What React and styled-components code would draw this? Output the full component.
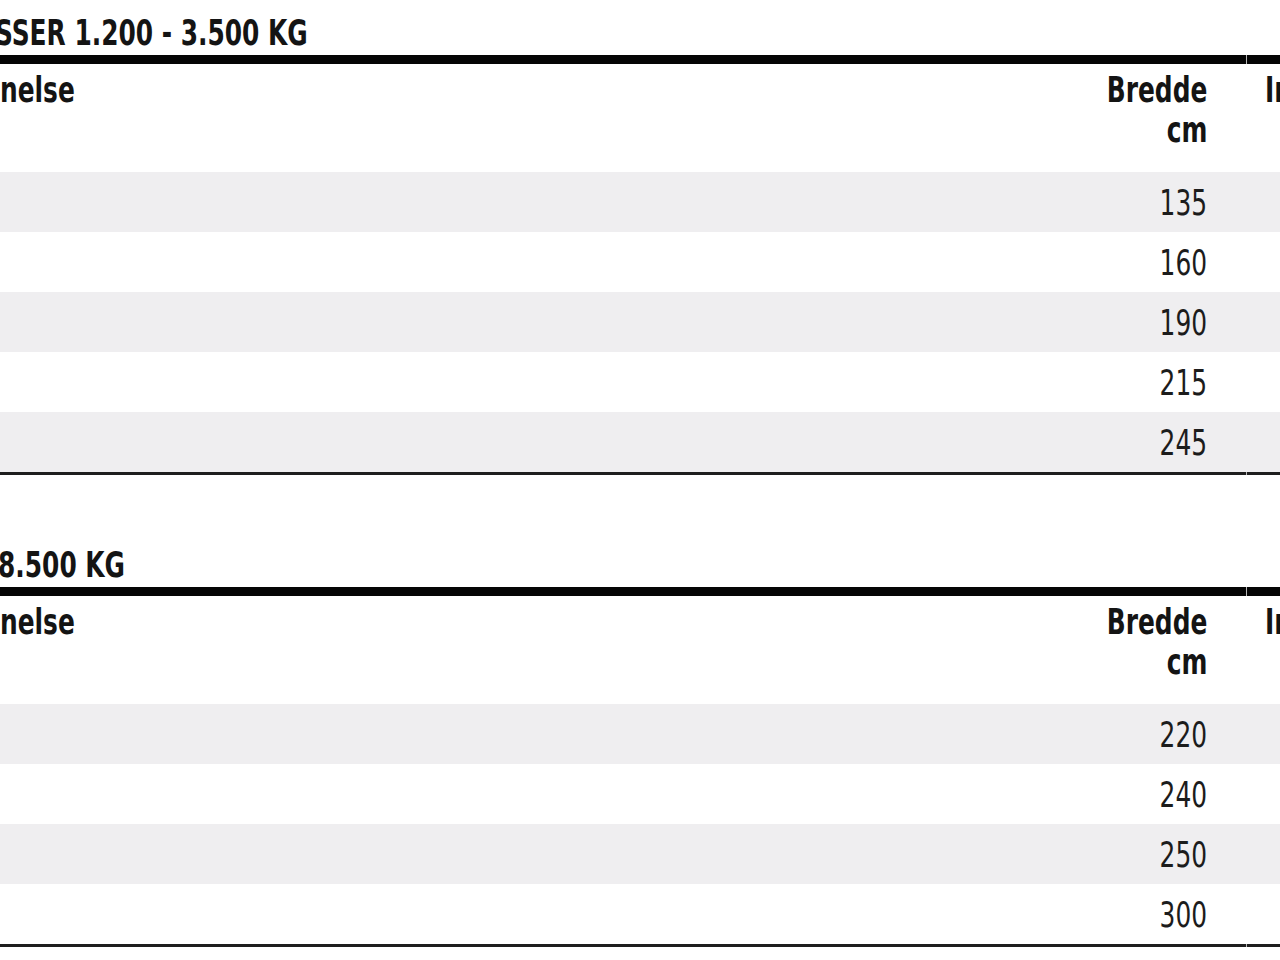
import React from "react";
import styled, { createGlobalStyle } from "styled-components";

const sections = [
  {
    title: "SSER 1.200 - 3.500 KG",
    indent: -5,
    rows: ["135", "160", "190", "215", "245"],
  },
  {
    title: "8.500 KG",
    indent: -2,
    rows: ["220", "240", "250", "300"],
  },
];

const App = () => {
  return (
    <Page>
      <GlobalStyle />
      {sections.map((s, i) => (
        <Section key={i} $first={i === 0}>
          <Title>
            <Narrow style={{ marginLeft: s.indent }}>{s.title}</Narrow>
          </Title>
          <Rule $h={9}>
            <RuleSeg />
            <RuleSeg />
          </Rule>
          <HeadRow>
            <HeadCell>
              <Narrow>nelse</Narrow>
            </HeadCell>
            <HeadCell $right>
              <Narrow $right>
                Bredde
                <br />
                cm
              </Narrow>
            </HeadCell>
            <HeadCell $last>
              <Narrow>Indv.</Narrow>
            </HeadCell>
          </HeadRow>
          {s.rows.map((r, j) => (
            <Row key={r} $striped={j % 2 === 0}>
              <Cell />
              <Cell $right>
                <Narrow $right>{r}</Narrow>
              </Cell>
              <Cell $last />
            </Row>
          ))}
          <Rule $h={3}>
            <RuleSeg $soft />
            <RuleSeg $soft />
          </Rule>
        </Section>
      ))}
    </Page>
  );
};

export default App;

const GlobalStyle = createGlobalStyle`
  html, body {
    margin: 0;
    padding: 0;
    background: #ffffff;
  }
  body {
    font-family: "DejaVu Sans Condensed", "Liberation Sans", sans-serif;
    color: #151515;
  }
`;

const Page = styled.div`
  width: 1280px;
  height: 960px;
  overflow: hidden;
  padding-top: 13px;
  box-sizing: border-box;
`;

const Section = styled.div`
  width: 1440px;
  margin-top: ${(p) => (p.$first ? "0" : "70px")};
`;

/* the source uses a DIN-like condensed face; squeeze DejaVu Condensed to its width */
const Narrow = styled.span`
  display: inline-block;
  transform: scaleX(0.79);
  transform-origin: ${(p) => (p.$right ? "right center" : "left center")};
  text-align: ${(p) => (p.$right ? "right" : "left")};
`;

const Title = styled.h2`
  margin: 0 0 2px 0;
  font-size: 35px;
  line-height: 40px;
  font-weight: 700;
  color: #141414;
  white-space: nowrap;
`;

const Rule = styled.div`
  display: grid;
  grid-template-columns: 1246px 1fr;
  column-gap: 1px;
  height: ${(p) => p.$h}px;
  background: #b8b8b8;
`;

const RuleSeg = styled.div`
  background: ${(p) => (p.$soft ? "#1e1e1e" : "#050505")};
`;

const HeadRow = styled.div`
  display: grid;
  grid-template-columns: 1000px 207px 1fr;
  height: 108px;
  padding-top: 6px;
  box-sizing: border-box;
`;

const HeadCell = styled.div`
  font-size: 35px;
  line-height: 40px;
  font-weight: 700;
  color: #141414;
  text-align: ${(p) => (p.$right ? "right" : "left")};
  padding-left: ${(p) => (p.$last ? "58px" : "0")};
  white-space: nowrap;
`;

const Row = styled.div`
  display: grid;
  grid-template-columns: 1000px 207px 1fr;
  align-items: center;
  height: 60px;
  background: ${(p) => (p.$striped ? "#efeef0" : "#ffffff")};
`;

const Cell = styled.div`
  font-size: 35px;
  line-height: 40px;
  font-weight: 400;
  color: #1c1c1c;
  text-align: ${(p) => (p.$right ? "right" : "left")};
  padding-left: ${(p) => (p.$last ? "58px" : "0")};
  padding-top: 2px;
`;
